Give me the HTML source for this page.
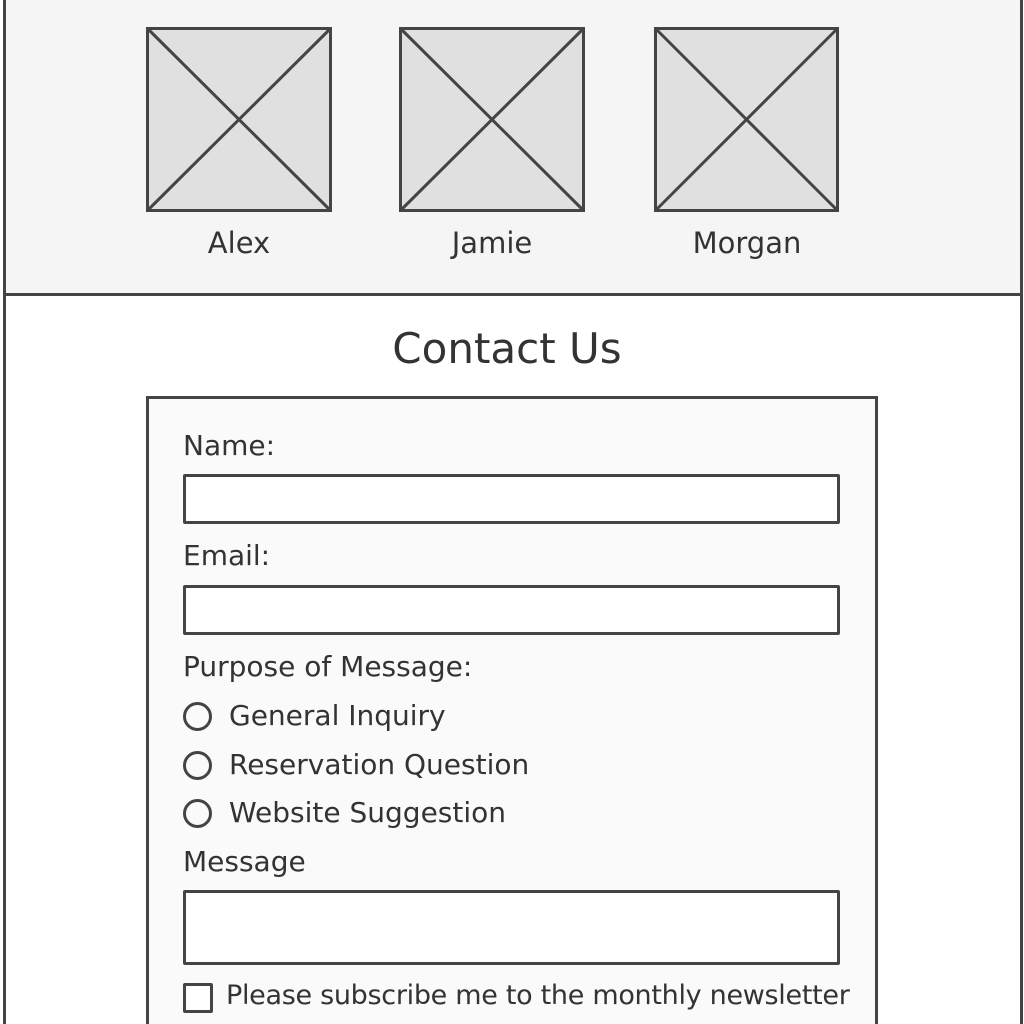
<!DOCTYPE html>
<html><head><style>
html,body{margin:0;width:1024px;height:1024px;overflow:hidden}
body{background:#fff;font-family:"DejaVu Sans","Liberation Sans",sans-serif;color:#333;position:relative}
.a{position:absolute}
.top{left:3px;top:0;width:1014px;height:293px;background:#f5f5f5;border-left:3px solid #444;border-right:3px solid #444;border-bottom:3px solid #444}
.bot{left:3px;top:296px;width:1014px;height:728px;border-left:3px solid #444;border-right:3px solid #444;background:#fff}
.nm{font-size:29px;width:186px;text-align:center;top:226px}
.form{left:146px;top:396px;width:726px;height:640px;border:3px solid #444;background:#fafafa}
.lbl{font-size:28px;left:183px}
.inp{left:183px;width:651px;height:44px;border:3px solid #444;background:#fff;border-radius:2px}
.rad{left:183px;width:29px;height:29px;border:3px solid #444;border-radius:50%;box-sizing:border-box}
.rt{left:229px;font-size:28px}
</style></head><body>
<div class="a top"></div>
<div class="a bot"></div>
<svg class="a" style="left:0;top:0" width="1024" height="300">
<g stroke="#444" stroke-width="3" fill="#e0e0e0">
<rect x="147.5" y="28.5" width="183" height="182"/><line x1="149" y1="30" x2="329" y2="209"/><line x1="329" y1="30" x2="149" y2="209"/>
<rect x="400.5" y="28.5" width="183" height="182"/><line x1="402" y1="30" x2="582" y2="209"/><line x1="582" y1="30" x2="402" y2="209"/>
<rect x="655.5" y="28.5" width="182" height="182"/><line x1="657" y1="30" x2="836" y2="209"/><line x1="836" y1="30" x2="657" y2="209"/>
</g></svg>
<div class="a nm" style="left:146px">Alex</div>
<div class="a nm" style="left:399px">Jamie</div>
<div class="a nm" style="left:654px">Morgan</div>
<div class="a" style="left:0;width:1014px;text-align:center;top:324px;font-size:42px">Contact Us</div>
<div class="a form"></div>
<div class="a lbl" style="top:429px">Name:</div>
<div class="a inp" style="top:474px"></div>
<div class="a lbl" style="top:539px">Email:</div>
<div class="a inp" style="top:585px"></div>
<div class="a lbl" style="top:650px">Purpose of Message:</div>
<div class="a rad" style="top:702px"></div><div class="a rt" style="top:699px">General Inquiry</div>
<div class="a rad" style="top:751px"></div><div class="a rt" style="top:748px">Reservation Question</div>
<div class="a rad" style="top:799px"></div><div class="a rt" style="top:796px">Website Suggestion</div>
<div class="a lbl" style="top:845px">Message</div>
<div class="a inp" style="top:890px;height:69px"></div>
<div class="a" style="left:183px;top:983px;width:24px;height:24px;border:3px solid #444;border-radius:2px;background:#fff"></div>
<div class="a" style="left:226px;top:980px;font-size:27px;letter-spacing:-0.3px">Please subscribe me to the monthly newsletter</div>
</body></html>
